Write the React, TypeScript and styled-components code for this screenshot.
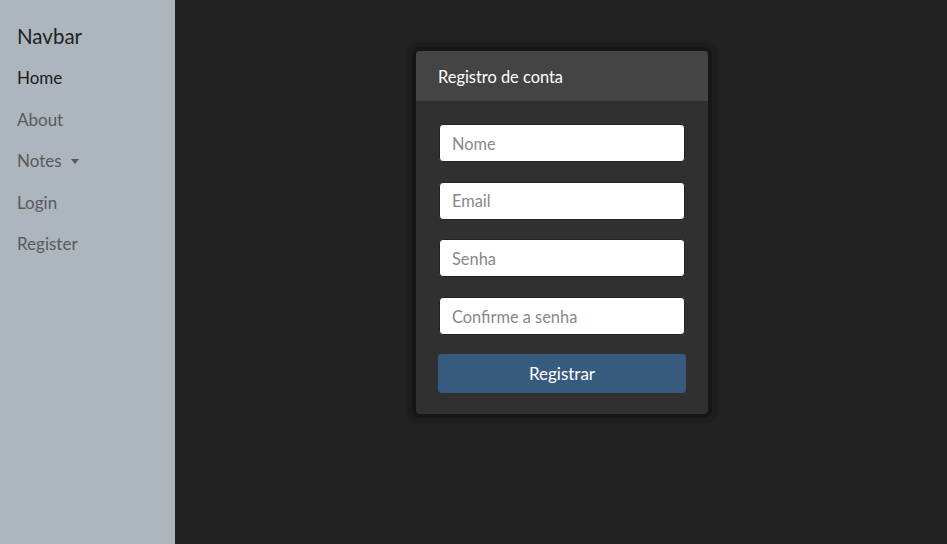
import styled, { createGlobalStyle } from "styled-components";

const GlobalStyle = createGlobalStyle`
  * { box-sizing: border-box; }
  html, body { margin: 0; padding: 0; height: 100%; }
  body {
    font-family: Lato, "Noto Sans", sans-serif;
    background: #222222;
  }
  #root { height: 100%; }
`;

const Layout = styled.div`
  display: flex;
  height: 100vh;
`;

const Sidebar = styled.nav`
  width: 175px;
  flex-shrink: 0;
  background: #adb5bd;
  padding: 23px 17px;
  display: flex;
  flex-direction: column;
`;

const Brand = styled.div`
  font-size: 20.5px;
  color: #222;
  line-height: 26px;
  margin-bottom: 17px;
`;

const NavItem = styled.a<{ $active?: boolean }>`
  font-size: 17px;
  line-height: 24px;
  padding: 0 0 17.5px;
  color: ${(p) => (p.$active ? "#1a1a1a" : "#5a5a5a")};
  text-decoration: none;
  display: flex;
  align-items: center;
`;

const Caret = styled.span`
  display: inline-block;
  margin-left: 9px;
  width: 0;
  height: 0;
  border-left: 4.5px solid transparent;
  border-right: 4.5px solid transparent;
  border-top: 5px solid #5a5a5a;
`;

const Main = styled.main`
  flex: 1;
  display: flex;
  justify-content: center;
  align-items: flex-start;
  padding: 51px 0 0 2px;
`;

const Card = styled.div`
  width: 292px;
  background: #303030;
  border-radius: 4px;
  overflow: hidden;
  box-shadow: 0 0 0 4px rgba(0, 0, 0, 0.24), 0 0 2px 9px rgba(0, 0, 0, 0.13);
`;

const CardHeader = styled.div`
  height: 50px;
  background: #444444;
  color: #fff;
  font-size: 16.4px;
  padding: 0 22px;
  display: flex;
  align-items: center;
`;

const CardBody = styled.form`
  padding: 23px 22px 21px;
  display: flex;
  flex-direction: column;
  gap: 19.7px;
`;

const Input = styled.input`
  height: 38px;
  margin: 0 1px;
  border: 1px solid #222;
  border-radius: 4px;
  background: #fff;
  padding: 0 12px;
  font-family: Lato, "Noto Sans", sans-serif;
  font-size: 16.4px;
  color: #222;
  outline: none;
  &::placeholder { color: #888; }
`;

const Button = styled.button`
  height: 39px;
  border: none;
  border-radius: 4px;
  background: #375a7f;
  color: #fff;
  font-family: Lato, "Noto Sans", sans-serif;
  font-size: 17px;
  cursor: pointer;
  margin-top: -1px;
`;

export default function App() {
  return (
    <>
      <GlobalStyle />
      <Layout>
        <Sidebar>
          <Brand>Navbar</Brand>
          <NavItem $active href="#">Home</NavItem>
          <NavItem href="#">About</NavItem>
          <NavItem href="#">Notes<Caret /></NavItem>
          <NavItem href="#">Login</NavItem>
          <NavItem href="#">Register</NavItem>
        </Sidebar>
        <Main>
          <Card>
            <CardHeader>Registro de conta</CardHeader>
            <CardBody onSubmit={(e) => e.preventDefault()}>
              <Input placeholder="Nome" />
              <Input placeholder="Email" type="email" />
              <Input placeholder="Senha" type="password" />
              <Input placeholder="Confirme a senha" type="password" />
              <Button type="submit">Registrar</Button>
            </CardBody>
          </Card>
        </Main>
      </Layout>
    </>
  );
}
